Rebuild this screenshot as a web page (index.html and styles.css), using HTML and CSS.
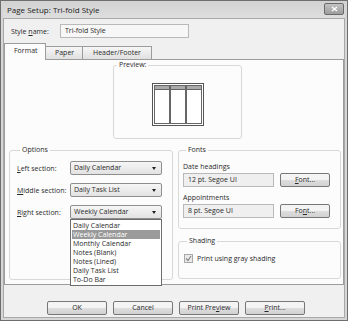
FILE: index.html
```html
<!DOCTYPE html>
<html lang="en">
<head>
  <meta charset="UTF-8">
  <title>Page Setup: Tri-fold Style</title>
  <link rel="stylesheet" href="styles.css">
</head>
<body>
  <div class="window">
    <div class="titlebar">
      <span class="title">Page Setup: Tri-fold Style</span>
      <span class="close">
        <svg width="7" height="6" viewBox="0 0 7 6"><path d="M1 1 L6 5 M6 1 L1 5" stroke="#fff" stroke-width="1.4"/></svg>
      </span>
    </div>

    <div class="client">
      <div class="style-row">
        <label>Style <u>n</u>ame:</label>
        <div class="textbox name">Tri-fold Style</div>
      </div>

      <div class="tabs">
        <div class="tab active">Format</div>
        <div class="tab">Paper</div>
        <div class="tab">Header/Footer</div>
      </div>

      <div class="panel">
        <fieldset class="group preview">
          <legend>Preview:</legend>
          <svg class="trifold" width="52" height="43" viewBox="0 0 52 43">
            <rect x="0.5" y="0.5" width="51" height="42" fill="#fff" stroke="#555"/>
            <rect x="2.5" y="2.5" width="15" height="38" fill="none" stroke="#666"/>
            <rect x="18.5" y="2.5" width="15" height="38" fill="none" stroke="#666"/>
            <rect x="34.5" y="2.5" width="15" height="38" fill="none" stroke="#666"/>
            <rect x="3" y="3" width="14" height="3" fill="#aaa"/>
            <rect x="19" y="3" width="14" height="3" fill="#aaa"/>
            <rect x="35" y="3" width="14" height="3" fill="#aaa"/>
            <path d="M3 6.5 H17 M19 6.5 H33 M35 6.5 H49" stroke="#666"/>
          </svg>
        </fieldset>

        <div class="columns">
          <fieldset class="group options">
            <legend>Options</legend>
            <div class="field">
              <label><u>L</u>eft section:</label>
              <div class="combo">Daily Calendar<span class="arrow"></span></div>
            </div>
            <div class="field">
              <label><u>M</u>iddle section:</label>
              <div class="combo">Daily Task List<span class="arrow"></span></div>
            </div>
            <div class="field">
              <label><u>R</u>ight section:</label>
              <div class="combo open">Weekly Calendar<span class="arrow"></span>
                <ul class="dropdown">
                  <li>Daily Calendar</li>
                  <li class="selected">Weekly Calendar</li>
                  <li>Monthly Calendar</li>
                  <li>Notes (Blank)</li>
                  <li>Notes (Lined)</li>
                  <li>Daily Task List</li>
                  <li>To-Do Bar</li>
                </ul>
              </div>
            </div>
          </fieldset>

          <div class="right-col">
            <fieldset class="group fonts">
              <legend>Fonts</legend>
              <div class="font-label">Date headings</div>
              <div class="font-row">
                <div class="textbox font-box">12 pt. Segoe UI</div>
                <button class="btn small"><u>F</u>ont...</button>
              </div>
              <div class="font-label">Appointments</div>
              <div class="font-row">
                <div class="textbox font-box">8 pt. Segoe UI</div>
                <button class="btn small">Fo<u>n</u>t...</button>
              </div>
            </fieldset>

            <fieldset class="group shading">
              <legend>Shading</legend>
              <div class="check-row">
                <span class="checkbox">
                  <svg width="7" height="7" viewBox="0 0 7 7"><path d="M1 3.5 L3 5.5 L6 1" fill="none" stroke="#888" stroke-width="1.2"/></svg>
                </span>
                <span>Print using gray shading</span>
              </div>
            </fieldset>
          </div>
        </div>
      </div>

      <div class="buttons">
        <button class="btn">OK</button>
        <button class="btn">Cancel</button>
        <button class="btn">Print Pre<u>v</u>iew</button>
        <button class="btn"><u>P</u>rint...</button>
      </div>
    </div>
  </div>
</body>
</html>
```

FILE: styles.css
```css
/* Reset */
body, html {
  margin: 0;
  padding: 0;
  background: #fff;
  font-family: 'Open Sans', sans-serif;
  font-size: 7px;
  color: #2a2a2a;
}

u {
  text-decoration: underline;
  text-underline-offset: 1px;
}

.window {
  box-sizing: border-box;
  width: 348px;
  height: 321px;
  border: 1px solid #6e6e6e;
  background: #d6d6d6;
  padding: 0 2px 2px 2px;
  display: flex;
  flex-direction: column;
}

/* Title bar */
.titlebar {
  height: 17px;
  flex-shrink: 0;
  display: flex;
  align-items: center;
  justify-content: space-between;
  padding-left: 4px;
  background: linear-gradient(#d2d2d2, #dedede);
}

.title {
  font-size: 8px;
  color: #222;
}

.close {
  width: 18px;
  height: 10px;
  margin-top: -2px;
  margin-right: 1px;
  border: 1px solid #6a6a6a;
  border-radius: 2px;
  background: linear-gradient(#c4c4c4, #9c9c9c);
  display: flex;
  align-items: center;
  justify-content: center;
}

.close svg {
  display: block;
}

/* Client area */
.client {
  flex: 1;
  border: 1px solid #a8a8a8;
  background: #f0f0f0;
}

.style-row {
  display: flex;
  align-items: center;
  margin-top: 5px;
  padding-left: 7px;
}

.style-row label {
  width: 49px;
}

.textbox {
  box-sizing: border-box;
  height: 14px;
  line-height: 12px;
  padding: 0 4px;
  border: 1px solid #b9b9b9;
  background: #f7f7f7;
  white-space: nowrap;
}

.textbox.name {
  width: 129px;
}

/* Tabs */
.tabs {
  display: flex;
  align-items: flex-end;
  height: 15px;
  margin-top: 6px;
  position: relative;
  z-index: 1;
}

.tab {
  box-sizing: border-box;
  height: 13px;
  line-height: 12px;
  padding: 0 9px;
  border: 1px solid #9c9c9c;
  border-bottom: none;
  margin-right: -1px;
  background: linear-gradient(#f6f6f6, #e0e0e0);
  text-align: center;
}

.tab:nth-child(2) {
  width: 38px;
}

.tab:nth-child(3) {
  width: 70px;
}

.tab.active {
  width: 42px;
  height: 17px;
  margin-bottom: -1px;
  line-height: 14px;
  background: #fcfcfc;
}

.panel {
  box-sizing: border-box;
  height: 226px;
  border: 1px solid #9c9c9c;
  background: #fcfcfc;
}

/* Group boxes */
.group {
  margin: 0;
  padding: 0;
  border: 1px solid #d8d8d8;
  border-radius: 3px;
  min-width: 0;
}

.group legend {
  padding: 0 2px;
  margin-left: 3px;
  line-height: 10px;
}

.preview {
  box-sizing: border-box;
  width: 129px;
  height: 79px;
  margin-left: 108px;
}

.trifold {
  display: block;
  margin: 13px auto 0;
}

.columns {
  display: grid;
  grid-template-columns: 164px 163px;
  column-gap: 5px;
  padding-left: 4px;
  margin-top: 6px;
}

.options {
  box-sizing: border-box;
  height: 135px;
  padding: 6px 0 0 7px;
}

.field {
  display: flex;
  align-items: center;
  height: 14px;
  margin-bottom: 8px;
}

.field label {
  width: 53px;
  flex-shrink: 0;
}

.combo {
  box-sizing: border-box;
  position: relative;
  width: 92px;
  height: 14px;
  line-height: 12px;
  padding-left: 3px;
  border: 1px solid #8e8e8e;
  border-radius: 2px;
  background: linear-gradient(#f6f6f6, #e2e2e2);
}

.arrow {
  position: absolute;
  right: 5px;
  top: 5px;
  border-left: 2.5px solid transparent;
  border-right: 2.5px solid transparent;
  border-top: 3px solid #222;
}

.dropdown {
  position: absolute;
  left: -1px;
  top: 13px;
  width: 92px;
  box-sizing: border-box;
  margin: 0;
  padding: 1px;
  list-style: none;
  border: 1px solid #6c6c6c;
  background: #fff;
  z-index: 2;
}

.dropdown li {
  height: 9px;
  line-height: 9px;
  padding-left: 1px;
  white-space: nowrap;
}

.dropdown li.selected {
  background: #9a9a9a;
  color: #fff;
}

.right-col {
  display: flex;
  flex-direction: column;
}

.fonts {
  box-sizing: border-box;
  height: 84px;
  padding: 7px 0 0 4px;
}

.font-label {
  line-height: 10px;
  margin-bottom: 1px;
}

.font-row {
  display: flex;
  gap: 6px;
  margin-bottom: 6px;
}

.font-box {
  width: 91px;
  background: #efefef;
}

.shading {
  box-sizing: border-box;
  height: 43px;
  margin-top: 7px;
  padding: 8px 0 0 5px;
}

.check-row {
  display: flex;
  align-items: center;
  gap: 4px;
}

.checkbox {
  box-sizing: border-box;
  width: 9px;
  height: 9px;
  border: 1px solid #a8a8a8;
  background: #eaeaea;
  display: flex;
  align-items: center;
  justify-content: center;
}

.checkbox svg {
  display: block;
}

/* Buttons */
.btn {
  box-sizing: border-box;
  width: 60px;
  height: 14px;
  padding: 0;
  font-family: inherit;
  font-size: 7px;
  line-height: 12px;
  color: #2a2a2a;
  border: 1px solid #777;
  border-radius: 2px;
  background: linear-gradient(#f4f4f4 45%, #dcdcdc 55%, #d2d2d2);
}

.btn.small {
  width: 50px;
}

.buttons {
  display: flex;
  gap: 6px;
  padding-left: 43px;
  margin-top: 16px;
}
```
